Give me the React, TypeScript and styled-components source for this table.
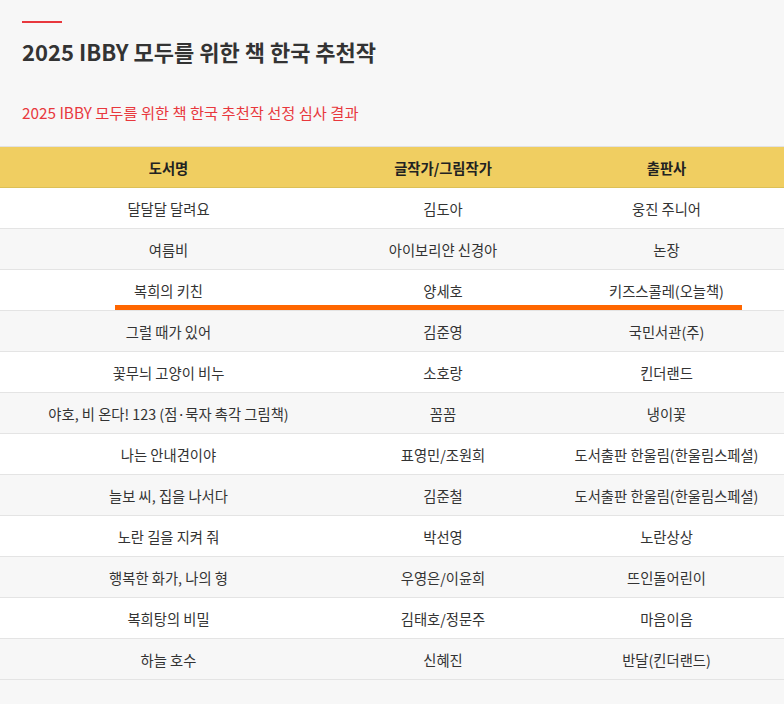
import styled, { createGlobalStyle } from "styled-components";

const GlobalStyle = createGlobalStyle`
    body {
        margin: 0;
        background: #f7f7f7;
        font-family: "Noto Sans CJK KR", "Noto Sans", sans-serif;
        color: #333;
    }
`;

const Page = styled.div`
    width: 784px;
    min-height: 704px;
    background: #f7f7f7;
`;

const Heading = styled.header`
    padding: 21px 22px 0;
`;

const Accent = styled.div`
    width: 40px;
    height: 2px;
    background: #e8383d;
`;

const Title = styled.h1`
    margin: 13px 0 0;
    font-size: 22px;
    line-height: 30px;
    font-weight: 700;
    color: #333;
`;

const Subtitle = styled.p`
    margin: 36px 0 0;
    font-size: 15.3px;
    line-height: 21px;
    color: #e8383d;
`;

const Table = styled.div`
    margin-top: 23px;
    border-top: 1px solid #e2e2e2;
`;

const Row = styled.div<{ $head?: boolean; $alt?: boolean }>`
    display: grid;
    grid-template-columns: 337px 212px 1fr;
    height: 40px;
    align-items: center;
    position: relative;
    background: ${(p) => (p.$head ? "#f0ce61" : p.$alt ? "#f7f7f7" : "#ffffff")};
    border-bottom: 1px solid ${(p) => (p.$head ? "#dcc056" : "#e4e4e4")};
    font-size: 14.3px;
    font-weight: ${(p) => (p.$head ? 700 : 400)};
    color: ${(p) => (p.$head ? "#222" : "#333")};
`;

const Cell = styled.div`
    text-align: center;
    white-space: nowrap;
`;

// orange highlight drawn under the third row
const Marker = styled.span`
    position: absolute;
    left: 115px;
    width: 627px;
    top: 35px;
    height: 5px;
    background: #ff6600;
`;

const books = [
    ["달달달 달려요", "김도아", "웅진 주니어"],
    ["여름비", "아이보리얀 신경아", "논장"],
    ["복희의 키친", "양세호", "키즈스콜레(오늘책)"],
    ["그럴 때가 있어", "김준영", "국민서관(주)"],
    ["꽃무늬 고양이 비누", "소호랑", "킨더랜드"],
    ["야호, 비 온다! 123 (점·묵자 촉각 그림책)", "꼼꼼", "냉이꽃"],
    ["나는 안내견이야", "표영민/조원희", "도서출판 한울림(한울림스페셜)"],
    ["늘보 씨, 집을 나서다", "김준철", "도서출판 한울림(한울림스페셜)"],
    ["노란 길을 지켜 줘", "박선영", "노란상상"],
    ["행복한 화가, 나의 형", "우영은/이윤희", "뜨인돌어린이"],
    ["복희탕의 비밀", "김태호/정문주", "마음이음"],
    ["하늘 호수", "신혜진", "반달(킨더랜드)"],
];

const App = () => {
    return (
        <Page>
            <GlobalStyle />
            <Heading>
                <Accent />
                <Title>2025 IBBY 모두를 위한 책 한국 추천작</Title>
                <Subtitle>2025 IBBY 모두를 위한 책 한국 추천작 선정 심사 결과</Subtitle>
            </Heading>
            <Table>
                <Row $head>
                    <Cell>도서명</Cell>
                    <Cell>글작가/그림작가</Cell>
                    <Cell>출판사</Cell>
                </Row>
                {books.map(([title, author, publisher], i) => (
                    <Row key={title} $alt={i % 2 === 1}>
                        <Cell>{title}</Cell>
                        <Cell>{author}</Cell>
                        <Cell>{publisher}</Cell>
                        {i === 2 && <Marker />}
                    </Row>
                ))}
            </Table>
        </Page>
    );
};

export default App;
